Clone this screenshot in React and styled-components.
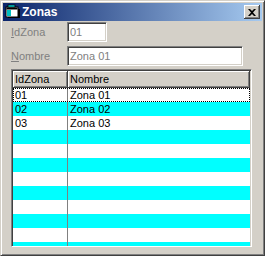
import React from "react";
import styled, { createGlobalStyle } from "styled-components";

const GlobalStyle = createGlobalStyle`
  body {
    margin: 0;
    background: #d4d0c8;
    font-family: "Liberation Sans", Arial, sans-serif;
    font-size: 11px;
  }
`;

const Window = styled.div`
  width: 265px;
  height: 256px;
  box-sizing: border-box;
  background: #d4d0c8;
  border: 1px solid;
  border-color: #d4d0c8 #404040 #404040 #d4d0c8;
  box-shadow: inset 1px 1px #fff, inset -1px -1px #808080;
  padding: 2px;
  display: flex;
  flex-direction: column;
`;

const TitleBar = styled.div`
  height: 18px;
  display: flex;
  align-items: center;
  gap: 1px;
  padding-left: 2px;
  background: linear-gradient(to right, #0a246a, #a6caf0);
`;

const Title = styled.span`
  color: #fff;
  font-weight: bold;
  font-size: 12px;
  line-height: 18px;
`;

const CloseButton = styled.button`
  margin-left: auto;
  margin-right: 2px;
  width: 16px;
  height: 14px;
  padding: 0;
  border: none;
  background: #d4d0c8;
  box-shadow: inset -1px -1px #404040, inset 1px 1px #fff, inset -2px -2px #808080;
  display: flex;
  align-items: center;
  justify-content: center;
`;

const Body = styled.div`
  padding: 1px 10px 0 8px;
  display: flex;
  flex-direction: column;
`;

const Field = styled.div`
  display: grid;
  grid-template-columns: 56px auto;
  align-items: center;
  height: 20px;
  margin-bottom: 4px;
`;

const Label = styled.span`
  color: #808080;
  u {
    text-decoration: underline;
  }
`;

const TextBox = styled.input`
  width: ${(p) => p.$width}px;
  height: 20px;
  box-sizing: border-box;
  margin: 0;
  padding: 0 2px;
  font-family: "Liberation Sans", Arial, sans-serif;
  font-size: 11px;
  color: #808080;
  background: #fff;
  border: 1px solid;
  border-color: #808080 #fff #fff #808080;
  box-shadow: inset 1px 1px #404040, inset -1px -1px #d4d0c8;
  outline: none;
`;

const Table = styled.div`
  margin-top: -1px;
  width: 241px;
  height: 178px;
  box-sizing: border-box;
  border: 1px solid;
  border-color: #808080 #fff #fff #808080;
  box-shadow: inset 1px 1px #404040, inset -1px -1px #d4d0c8;
  padding: 1px;
  overflow: hidden;
  background: #fff;
`;

const HeaderRow = styled.div`
  display: grid;
  grid-template-columns: 55px 1fr;
  height: 17px;
`;

const HeaderCell = styled.div`
  background: #d4d0c8;
  box-shadow: inset -1px -1px #404040, inset 1px 1px #fff, inset -2px -2px #808080;
  padding-left: 2px;
  line-height: 16px;
  color: #000;
`;

const Row = styled.div`
  display: grid;
  grid-template-columns: 55px 1fr;
  height: 14px;
  background: ${(p) => (p.$alt ? "#00ffff" : "#fff")};
  outline: ${(p) => (p.$focused ? "1px dotted #000" : "none")};
  outline-offset: -1px;
`;

const Cell = styled.div`
  box-sizing: border-box;
  padding-left: 2px;
  line-height: 14px;
  color: #000;
  border-right: ${(p) => (p.$divider ? "1px solid #808080" : "none")};
`;

const WindowIcon = () => (
  <svg width="16" height="16" viewBox="0 0 16 16">
    <rect x="1" y="3" width="12" height="10" fill="#fff" stroke="#000" />
    <rect x="1.5" y="3.5" width="11" height="2" fill="#000" />
    <rect x="2" y="6" width="4" height="6" fill="#00c0c0" />
    <rect x="6" y="6" width="6" height="6" fill="#fff" />
    <rect x="13" y="5" width="2" height="9" fill="#000" />
    <rect x="3" y="13" width="12" height="1" fill="#000" />
    <rect x="3" y="1" width="7" height="2" fill="#00ffff" stroke="#000" strokeWidth="0.8" />
  </svg>
);

const CloseIcon = () => (
  <svg width="8" height="7" viewBox="0 0 8 7">
    <path d="M0 0h2l2 2 2-2h2L5 3.5 8 7H6L4 5 2 7H0l3-3.5z" fill="#000" />
  </svg>
);

const rows = [
  { id: "01", nombre: "Zona 01" },
  { id: "02", nombre: "Zona 02" },
  { id: "03", nombre: "Zona 03" },
];

const App = () => {
  const lines = Array.from({ length: 12 }, (_, i) => rows[i] || null);

  return (
    <>
      <GlobalStyle />
      <Window>
        <TitleBar>
          <WindowIcon />
          <Title>Zonas</Title>
          <CloseButton>
            <CloseIcon />
          </CloseButton>
        </TitleBar>
        <Body>
          <Field>
            <Label>
              <u>I</u>dZona
            </Label>
            <TextBox $width={40} value="01" readOnly />
          </Field>
          <Field>
            <Label>
              <u>N</u>ombre
            </Label>
            <TextBox $width={176} value="Zona 01" readOnly />
          </Field>
          <Table>
            <HeaderRow>
              <HeaderCell>IdZona</HeaderCell>
              <HeaderCell>Nombre</HeaderCell>
            </HeaderRow>
            {lines.map((r, i) => (
              <Row key={i} $alt={i % 2 === 1} $focused={i === 0}>
                <Cell $divider>{r ? r.id : ""}</Cell>
                <Cell>{r ? r.nombre : ""}</Cell>
              </Row>
            ))}
          </Table>
        </Body>
      </Window>
    </>
  );
};

export default App;
